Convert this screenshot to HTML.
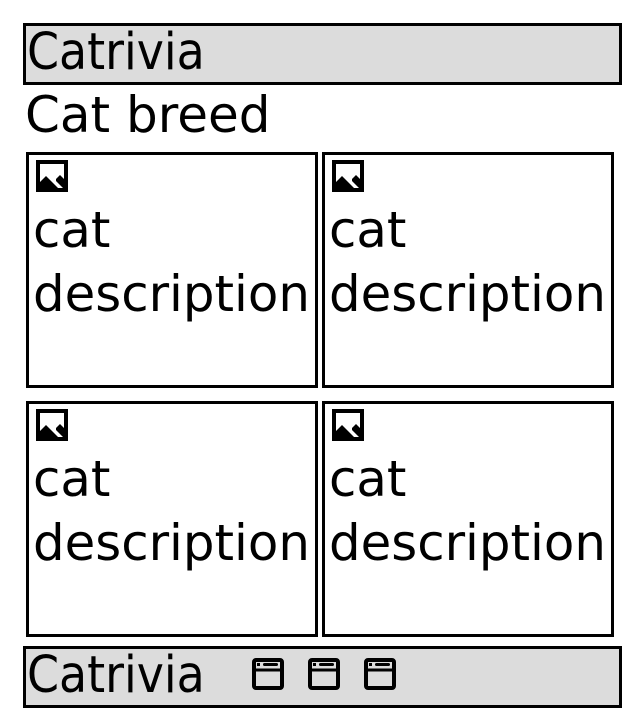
<!DOCTYPE html>
<html><head><meta charset="utf-8"><style>
body{margin:0;width:640px;height:726px;background:#fff;position:relative;font-family:"DejaVu Sans","Liberation Sans",sans-serif;color:#000;overflow:hidden}
.bar{position:absolute;left:23px;width:593px;height:56px;border:3px solid #000;background:#dcdcdc}
.bar .t{position:absolute;left:1px;top:-5px;font-family:"DejaVu Sans Condensed","DejaVu Sans",sans-serif;font-size:51px;line-height:64px;white-space:nowrap}
.h{position:absolute;left:25px;top:83px;font-size:50px;line-height:64px}
.card{position:absolute;width:286px;height:230px;border:3px solid #000;box-sizing:content-box}
.card svg{position:absolute;left:7px;top:5px;width:32px;height:32px}
.card .tx{position:absolute;left:4px;top:43px;font-size:49.8px;line-height:64px;white-space:nowrap}
.fi{position:absolute;top:658px;width:32px;height:32px}
</style></head><body>
<div class="bar" style="top:23px"><span class="t">Catrivia</span></div>
<div class="h">Cat breed</div>
<div class="card" style="left:26px;top:152px"><svg viewBox="0 0 32 32"><rect width="32" height="32" fill="#000"/><path d="M4 4 H28 V19 L24 15 L20 19 L20 21 L27 28 L22 28 L10 16 L4 22 Z" fill="#fff"/></svg><div class="tx">cat<br>description</div></div>
<div class="card" style="left:322px;top:152px"><svg viewBox="0 0 32 32"><rect width="32" height="32" fill="#000"/><path d="M4 4 H28 V19 L24 15 L20 19 L20 21 L27 28 L22 28 L10 16 L4 22 Z" fill="#fff"/></svg><div class="tx">cat<br>description</div></div>
<div class="card" style="left:26px;top:401px"><svg viewBox="0 0 32 32"><rect width="32" height="32" fill="#000"/><path d="M4 4 H28 V19 L24 15 L20 19 L20 21 L27 28 L22 28 L10 16 L4 22 Z" fill="#fff"/></svg><div class="tx">cat<br>description</div></div>
<div class="card" style="left:322px;top:401px"><svg viewBox="0 0 32 32"><rect width="32" height="32" fill="#000"/><path d="M4 4 H28 V19 L24 15 L20 19 L20 21 L27 28 L22 28 L10 16 L4 22 Z" fill="#fff"/></svg><div class="tx">cat<br>description</div></div>
<div class="bar" style="top:646px"><span class="t">Catrivia</span></div>
<svg class="fi" style="left:252px" viewBox="0 0 32 32"><rect x="2" y="2" width="28" height="28" rx="2" fill="none" stroke="#000" stroke-width="4"/><path d="M2 12 H30" stroke="#000" stroke-width="3"/><rect x="5" y="5" width="3" height="3" fill="#000"/><rect x="11" y="5" width="15" height="3" rx="1.5" fill="#000"/></svg>
<svg class="fi" style="left:308px" viewBox="0 0 32 32"><rect x="2" y="2" width="28" height="28" rx="2" fill="none" stroke="#000" stroke-width="4"/><path d="M2 12 H30" stroke="#000" stroke-width="3"/><rect x="5" y="5" width="3" height="3" fill="#000"/><rect x="11" y="5" width="15" height="3" rx="1.5" fill="#000"/></svg>
<svg class="fi" style="left:364px" viewBox="0 0 32 32"><rect x="2" y="2" width="28" height="28" rx="2" fill="none" stroke="#000" stroke-width="4"/><path d="M2 12 H30" stroke="#000" stroke-width="3"/><rect x="5" y="5" width="3" height="3" fill="#000"/><rect x="11" y="5" width="15" height="3" rx="1.5" fill="#000"/></svg>
</body></html>
